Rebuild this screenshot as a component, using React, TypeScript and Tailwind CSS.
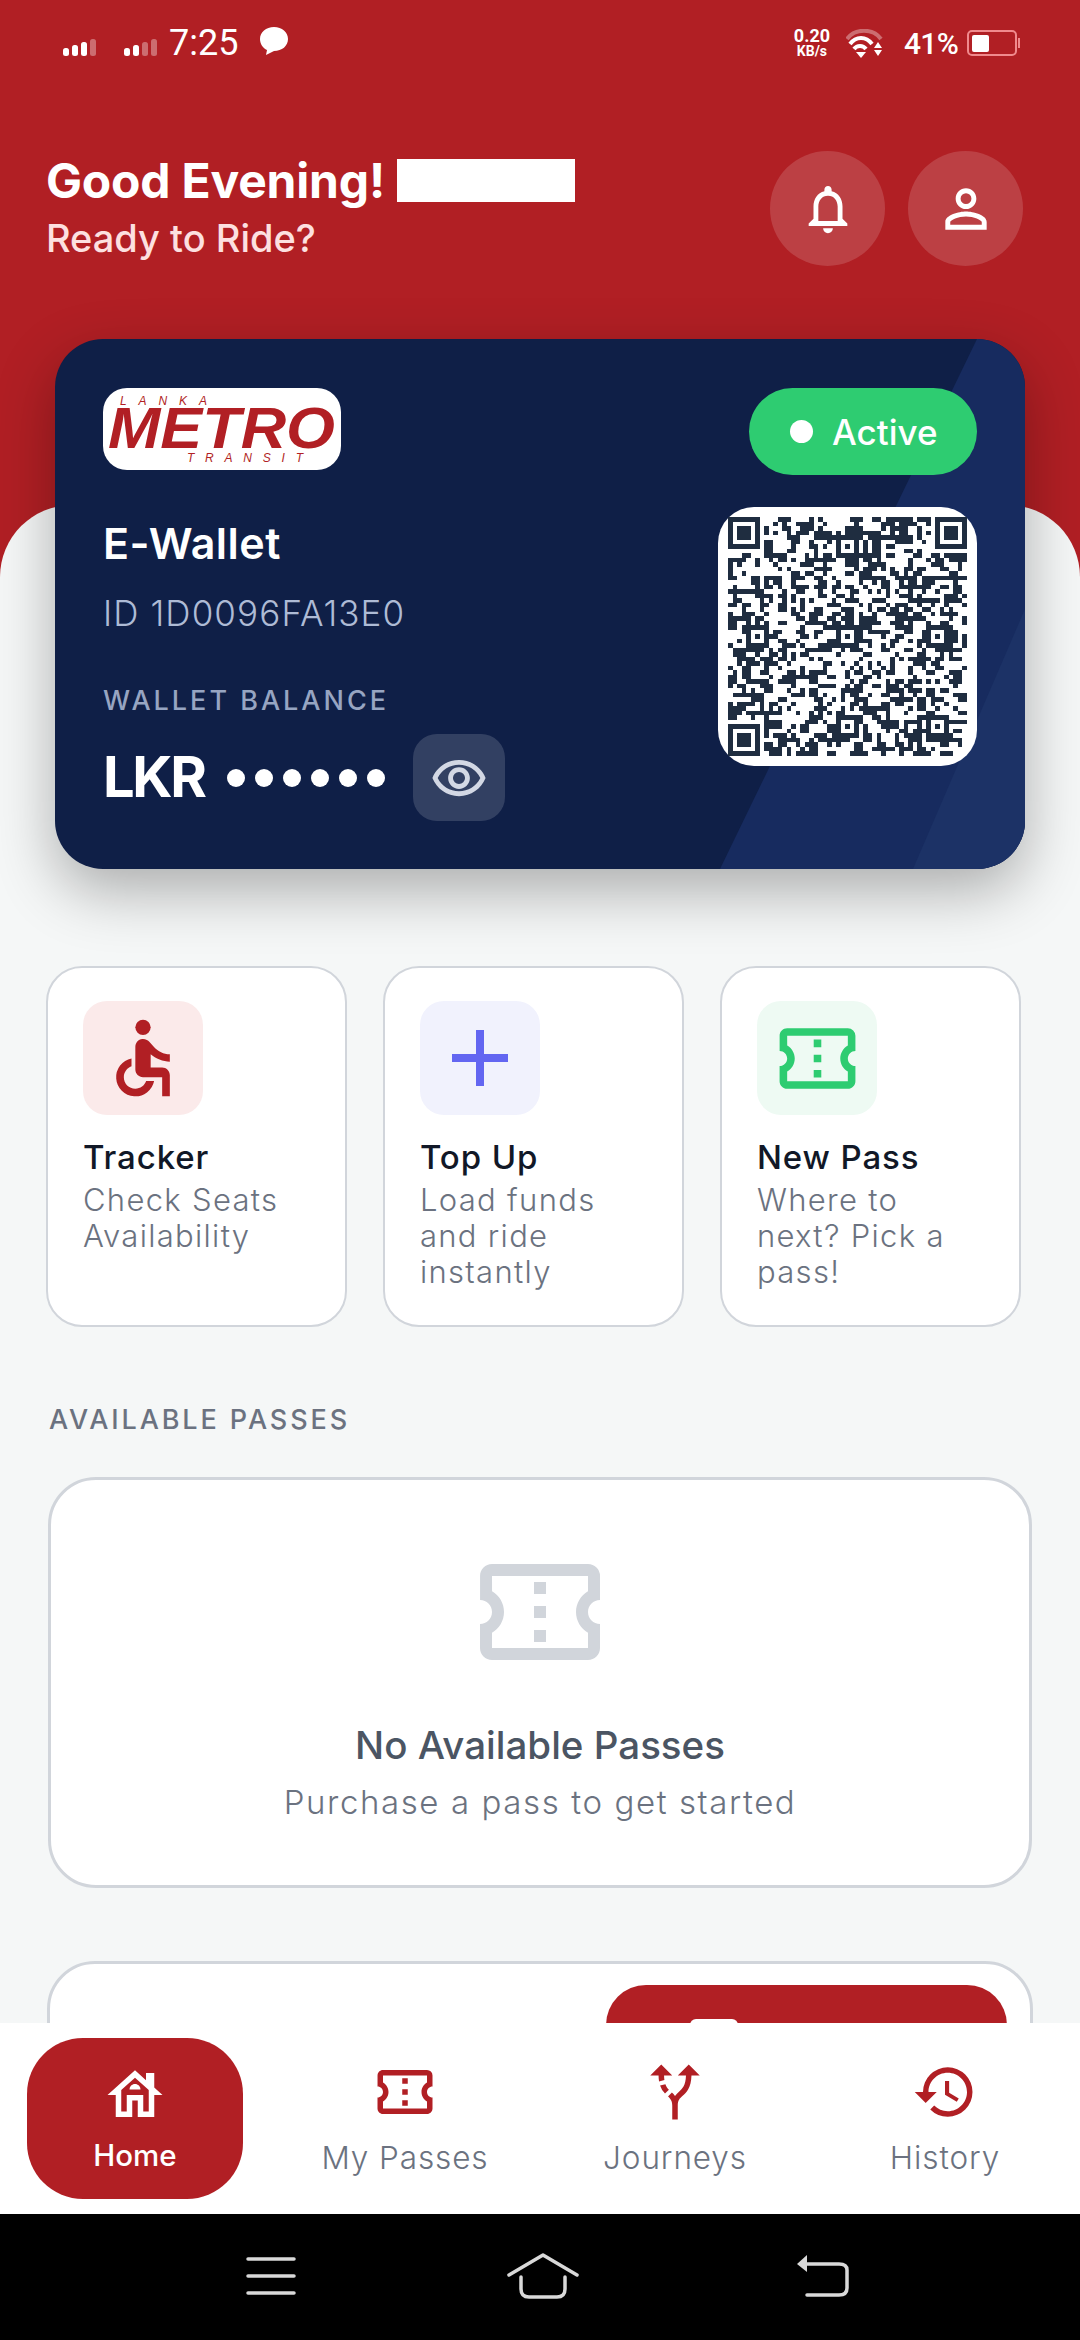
import React from "react";
import {
  MdAccessible,
  MdAdd,
  MdAltRoute,
  MdHistory,
  MdOutlineConfirmationNumber,
  MdOutlineHouse,
  MdOutlineNotifications,
  MdOutlinePersonOutline,
  MdOutlineRemoveRedEye,
} from "react-icons/md";

const SIZE = 53;

function qrPath(): string {
  let seed = 40213;
  const rand = () => {
    seed = (seed * 1664525 + 1013904223) >>> 0;
    return (seed >>> 16) / 65535;
  };
  const grid: boolean[][] = [];
  for (let r = 0; r < SIZE; r++) {
    grid.push([]);
    for (let c = 0; c < SIZE; c++) {
      const left = c > 0 ? grid[r][c - 1] : false;
      const up = r > 0 ? grid[r - 1][c] : false;
      grid[r].push(rand() < 0.36 + (left ? 0.12 : 0) + (up ? 0.1 : 0));
    }
  }
  const finder = (r0: number, c0: number) => {
    for (let r = -1; r <= 7; r++)
      for (let c = -1; c <= 7; c++) {
        const y = r0 + r;
        const x = c0 + c;
        if (y < 0 || x < 0 || y >= SIZE || x >= SIZE) continue;
        const ring = r === 0 || r === 6 || c === 0 || c === 6;
        const core = r >= 2 && r <= 4 && c >= 2 && c <= 4;
        grid[y][x] = r >= 0 && r <= 6 && c >= 0 && c <= 6 && (ring || core);
      }
  };
  finder(0, 0);
  finder(0, SIZE - 7);
  finder(SIZE - 7, 0);
  const aligns: [number, number][] = [
    [6, 26],
    [26, 6],
    [26, 26],
    [26, 46],
    [46, 26],
    [46, 46],
  ];
  for (const [ar, ac] of aligns) {
    for (let r = -2; r <= 2; r++)
      for (let c = -2; c <= 2; c++) {
        const edge = Math.abs(r) === 2 || Math.abs(c) === 2;
        grid[ar + r][ac + c] = edge || (r === 0 && c === 0);
      }
  }
  let d = "";
  for (let r = 0; r < SIZE; r++)
    for (let c = 0; c < SIZE; c++)
      if (grid[r][c]) d += `M${c} ${r}h1v1h-1z`;
  return d;
}

function Signal({ weak }: { weak?: boolean }) {
  const bars = [
    { x: 0, h: 8, o: 1 },
    { x: 9, h: 11, o: 1 },
    { x: 18, h: 14, o: weak ? 0.35 : 1 },
    { x: 27, h: 17, o: 0.35 },
  ];
  return (
    <svg width="34" height="17" viewBox="0 0 34 17" className="shrink-0">
      {bars.map((b) => (
        <rect key={b.x} x={b.x} y={17 - b.h} width="6" height={b.h} rx="2.5" fill="#fff" opacity={b.o} />
      ))}
    </svg>
  );
}

function StatusBar() {
  return (
    <div className="flex h-[80px] items-start justify-between pl-[63px] pr-[60px] text-white [font-family:Roboto,sans-serif]">
      <div className="flex items-center pt-[26px]">
        <div className="flex items-center gap-[27px] pt-[8px]">
          <Signal />
          <Signal weak />
        </div>
        <span className="ml-[11px] text-[36px] leading-[34px]">7:25</span>
        <svg width="32" height="30" viewBox="0 0 32 30" className="ml-[20px] -mt-[4px]">
          <path d="M16 1C8 1 2 6 2 13c0 5 3 9 7 11l-1 5 8-4c8 0 14-5 14-12S24 1 16 1z" fill="#fff" />
        </svg>
      </div>
      <div className="flex items-center pt-[27px]">
        <div className="flex flex-col items-center font-bold leading-none">
          <span className="text-[18px] leading-[16px]">0.20</span>
          <span className="text-[14px] leading-[14px]">KB/s</span>
        </div>
        <svg width="37" height="29" viewBox="0 0 37 29" className="ml-[16px]">
          <path d="M1 10 C9 -1 27 -1 35 10" fill="none" stroke="#fff" strokeOpacity="0.35" strokeWidth="4" />
          <path d="M5 15 C11 7 21 7 27 15" fill="none" stroke="#fff" strokeWidth="4" transform="translate(-1 0)" />
          <path d="M9 20 C12 16 18 16 21 20" fill="none" stroke="#fff" strokeWidth="4" transform="translate(-1 0)" />
          <path d="M10 23 h10 l-5 6 z" fill="#fff" />
          <path d="M32 13 l4 6 h-8 z M28 21 h8 l-4 6 z" fill="#fff" />
        </svg>
        <span className="ml-[21px] mt-[2px] text-[30px] font-medium leading-[30px] tracking-tight">41%</span>
        <div className="ml-[9px] flex items-center">
          <div className="flex h-[26px] w-[50px] items-center rounded-[5px] border-2 border-[#f08a8d] pl-[3px]">
            <div className="h-[17px] w-[17px] rounded-[2px] bg-white" />
          </div>
          <div className="ml-[1px] h-[10px] w-[2px] bg-[#f08a8d]" />
        </div>
      </div>
    </div>
  );
}

function Header() {
  return (
    <div className="h-[425px]">
      <div className="mt-[71px] flex items-center justify-between pl-[46px] pr-[57px]">
        <div>
          <div className="flex items-center">
            <h1 className="w-[351px] whitespace-nowrap text-[48px] font-bold leading-[56px] tracking-[-0.2px] text-white">Good Evening!</h1>
            <div className="h-[43px] w-[178px] bg-white" />
          </div>
          <p className="mt-[2px] text-[38px] font-medium leading-[54px] text-[#fde0e0]">Ready to Ride?</p>
        </div>
        <div className="flex gap-[23px]">
          <div className="flex h-[115px] w-[115px] items-center justify-center rounded-full bg-white/15">
            <MdOutlineNotifications className="text-[58px] text-white" />
          </div>
          <div className="flex h-[115px] w-[115px] items-center justify-center rounded-full bg-white/15">
            <MdOutlinePersonOutline className="text-[62px] text-white" />
          </div>
        </div>
      </div>
    </div>
  );
}

function Logo() {
  return (
    <div className="h-[82px] w-[238px] overflow-hidden rounded-[24px] bg-white">
      <svg width="238" height="82" viewBox="0 0 238 82">
        <text x="17" y="17" fontSize="12" fontStyle="italic" fill="#b11f24" textLength="87" fontFamily="Liberation Sans, sans-serif">LANKA</text>
        <text x="5" y="60" fontSize="57" fontWeight="700" fontStyle="italic" fill="#b11f24" textLength="227" lengthAdjust="spacingAndGlyphs" fontFamily="Liberation Sans, sans-serif">METRO</text>
        <text x="84" y="74" fontSize="12" fontStyle="italic" fill="#b11f24" textLength="116" fontFamily="Liberation Sans, sans-serif">TRANSIT</text>
      </svg>
    </div>
  );
}

function WalletCard() {
  const qr = React.useMemo(qrPath, []);
  return (
    <div className="relative ml-[55px] -mt-[166px] h-[530px] w-[970px] overflow-hidden rounded-[48px] bg-[#0f1f47] shadow-[0_22px_60px_rgba(0,0,0,0.3)]">
      <svg className="absolute inset-0" width="970" height="530" viewBox="0 0 970 530">
        <polygon points="922,0 970,0 970,530 665,530" fill="#172b5f" />
        <polygon points="970,270 970,530 858,530" fill="#1c3266" />
      </svg>
      <div className="relative flex h-full justify-between pl-[48px] pr-[48px] pt-[49px]">
        <div className="flex flex-col">
          <Logo />
          <h2 className="mt-[50px] text-[43px] font-semibold leading-[46px] tracking-[0.5px] text-white">E-Wallet</h2>
          <p className="mt-[24px] text-[35px] font-light leading-[46px] tracking-[1.1px] text-[#aebbd5]">ID 1D0096FA13E0</p>
          <p className="mt-[48px] text-[27px] font-medium leading-[34px] tracking-[3px] text-[#97a5c2]">WALLET BALANCE</p>
          <div className="mt-[16px] flex items-center">
            <span className="text-[56px] font-bold leading-[87px] tracking-[-2.3px] text-white">LKR</span>
            <div className="ml-[22px] flex gap-[10px]">
              {[0, 1, 2, 3, 4, 5].map((i) => (
                <span key={i} className="h-[18px] w-[18px] rounded-full bg-white" />
              ))}
            </div>
            <div className="ml-[28px] flex h-[87px] w-[92px] items-center justify-center rounded-[24px] bg-white/15">
              <MdOutlineRemoveRedEye className="text-[58px] text-[#d3d8e4]" />
            </div>
          </div>
        </div>
        <div className="flex flex-col items-end">
          <div className="flex h-[87px] w-[228px] items-center rounded-full bg-[#2ecc71] pl-[41px]">
            <span className="h-[23px] w-[23px] rounded-full bg-white" />
            <span className="ml-[19px] mt-[2px] text-[35px] font-medium leading-none text-white">Active</span>
          </div>
          <div className="mt-[32px] flex h-[259px] w-[259px] items-center justify-center rounded-[36px] bg-white">
            <svg width="239" height="239" viewBox="0 0 53 53" shapeRendering="crispEdges">
              <path d={qr} fill="#1f2d40" />
            </svg>
          </div>
        </div>
      </div>
    </div>
  );
}

function ActionCard({
  title,
  lines,
  box,
  icon,
}: {
  title: string;
  lines: string[];
  box: string;
  icon: React.ReactNode;
}) {
  return (
    <div className="h-[361px] w-[301px] rounded-[36px] border-2 border-[#d1d5db] bg-white pl-[35px] pt-[33px]">
      <div className={`flex h-[114px] w-[120px] items-center justify-center rounded-[24px] ${box}`}>{icon}</div>
      <h3 className="mt-[21px] text-[33px] font-medium leading-[42px] tracking-[0.9px] text-[#111827]">{title}</h3>
      <div className="mt-[4px] text-[31px] font-light leading-[36px] tracking-[1.3px] text-[#6b7280]">
        {lines.map((l) => (
          <p key={l}>{l}</p>
        ))}
      </div>
    </div>
  );
}

function Body() {
  return (
    <div className="h-[1518px] rounded-t-[72px] bg-[#f5f7f7]">
      <WalletCard />
      <div className="mt-[97px] flex gap-[36px] pl-[46px]">
        <ActionCard
          title="Tracker"
          lines={["Check Seats", "Availability"]}
          box="bg-[#fbeaea]"
          icon={<MdAccessible className="text-[92px] text-[#b11f24]" />}
        />
        <ActionCard
          title="Top Up"
          lines={["Load funds", "and ride", "instantly"]}
          box="bg-[#f1f2fd]"
          icon={<MdAdd className="text-[96px] text-[#6366f1]" />}
        />
        <ActionCard
          title="New Pass"
          lines={["Where to", "next? Pick a", "pass!"]}
          box="bg-[#eefaf3]"
          icon={<MdOutlineConfirmationNumber className="text-[91px] text-[#2ecc71]" />}
        />
      </div>
      <h4 className="ml-[49px] mt-[75px] text-[27px] font-medium leading-[36px] tracking-[2.9px] text-[#6b7280]">
        AVAILABLE PASSES
      </h4>
      <div className="ml-[48px] mt-[39px] flex h-[411px] w-[984px] flex-col items-center rounded-[48px] border-[3px] border-[#d1d5db] bg-white">
        <MdOutlineConfirmationNumber className="mt-[60px] text-[144px] text-[#d1d5db]" />
        <p className="mt-[39px] text-[38.5px] font-medium leading-[44px] text-[#4b5563]">No Available Passes</p>
        <p className="mt-[15px] text-[33px] font-light leading-[40px] tracking-[1.6px] text-[#6b7280]">
          Purchase a pass to get started
        </p>
      </div>
      <div className="ml-[47px] mt-[73px] h-[200px] w-[986px] rounded-[48px] border-[3px] border-[#d1d5db] bg-white pl-[556px] pt-[21px]">
        <div className="h-[120px] w-[401px] rounded-[40px] bg-[#b11f24] pl-[84px] pt-[34px]">
          <div className="h-[40px] w-[48px] rounded-[6px] bg-white" />
        </div>
      </div>
    </div>
  );
}

function NavItem({ label, icon }: { label: string; icon: React.ReactNode }) {
  return (
    <div className="flex flex-col items-center pt-[25px]">
      <div className="flex h-[88px] items-center justify-center text-[#b11f24]">{icon}</div>
      <span className="mt-[2px] text-[31.5px] font-light leading-[40px] tracking-[0.9px] text-[#6b7280]">{label}</span>
    </div>
  );
}

function BottomNav() {
  return (
    <div className="relative z-10 grid h-[191px] grid-cols-4 bg-white">
      <div className="mx-[27px] mt-[15px] flex h-[161px] flex-col items-center rounded-[56px] bg-[#b11f24] pt-[24px]">
        <MdOutlineHouse className="text-[66px] text-white" />
        <span className="mt-[9px] text-[29.5px] font-medium leading-[36px] text-white">Home</span>
      </div>
      <NavItem label="My Passes" icon={<MdOutlineConfirmationNumber className="text-[66px]" />} />
      <NavItem label="Journeys" icon={<MdAltRoute className="text-[66px]" />} />
      <NavItem label="History" icon={<MdHistory className="text-[66px]" />} />
    </div>
  );
}

function SystemBar() {
  return (
    <div className="relative z-10 flex h-[126px] items-center justify-center bg-black pb-[3px] pl-[15px]">
      <div className="flex w-[603px] items-center justify-between">
        <svg width="50" height="40" viewBox="0 0 50 40" fill="none" stroke="#d9d9d9" strokeWidth="3.5" strokeLinecap="round">
          <path d="M2 3H48M2 20H48M2 37H48" />
        </svg>
        <svg width="72" height="46" viewBox="0 0 72 46" fill="none" stroke="#d9d9d9" strokeWidth="3.5" strokeLinecap="round" strokeLinejoin="round" className="-ml-[8px]">
          <path d="M2 22L36 2L70 22" />
          <path d="M14 24V36Q14 44 22 44H50Q58 44 58 36V24" />
        </svg>
        <svg width="52" height="44" viewBox="0 0 52 44" fill="none">
          <path d="M8 10H42Q50 10 50 16V34Q50 41 42 41H10" stroke="#d9d9d9" strokeWidth="3.5" strokeLinecap="round" />
          <path d="M10 1V18L0 10Z" fill="#d9d9d9" />
        </svg>
      </div>
    </div>
  );
}

export default function App() {
  return (
    <div className="flex h-[2340px] w-[1080px] flex-col overflow-hidden bg-[#b11f24] [font-family:Inter,sans-serif]">
      <StatusBar />
      <Header />
      <Body />
      <BottomNav />
      <SystemBar />
    </div>
  );
}
